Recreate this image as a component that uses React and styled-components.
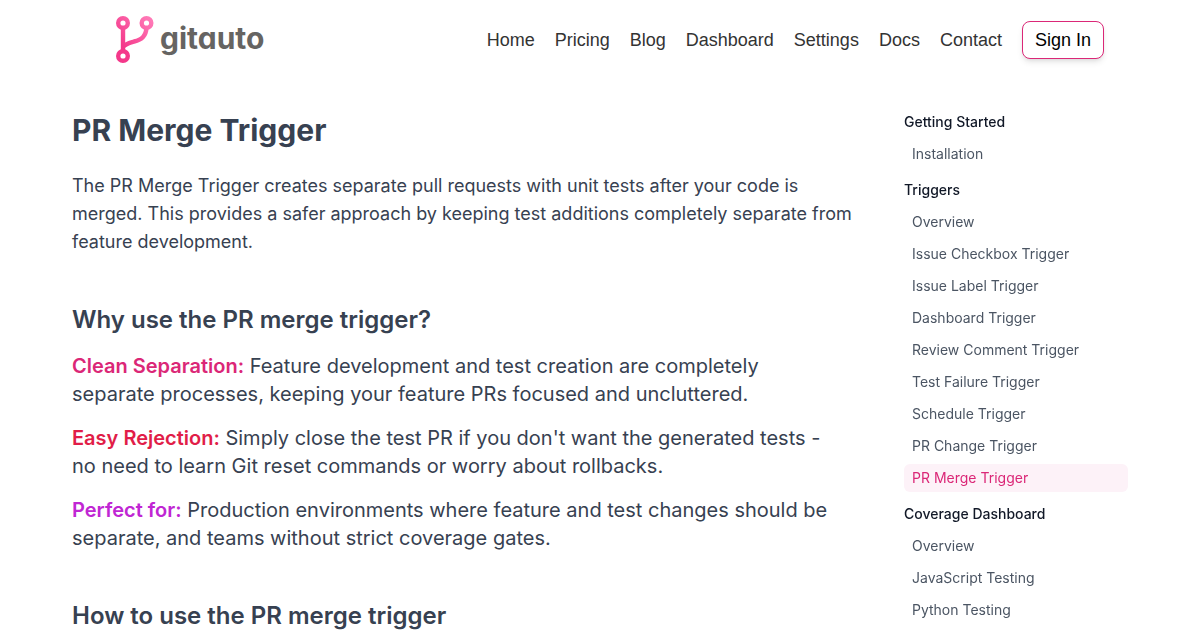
import React from 'react';
import styled, { createGlobalStyle } from 'styled-components';

const GlobalStyle = createGlobalStyle`
  *, *::before, *::after { box-sizing: border-box; }
  body {
    margin: 0;
    background: #fff;
    color: #374151;
    font-family: Inter, "Liberation Sans", sans-serif;
  }
  h1, h2, h3, p, ul { margin: 0; padding: 0; }
  ul { list-style: none; }
  a { color: inherit; text-decoration: none; }
`;

const Header = styled.header`
  display: flex;
  align-items: center;
  justify-content: space-between;
  max-width: 1200px;
  height: 80px;
  margin: 0 auto;
  padding: 0 96px;
  font-family: "Liberation Sans", Arial, sans-serif;
`;

const LogoLink = styled.a`
  display: flex;
  align-items: center;
  gap: 6px;
  padding-left: 20px;
`;

const Wordmark = styled.span`
  padding-bottom: 4px;
  color: #666462;
  font: 700 30px/36px Inter, sans-serif;
  font-feature-settings: "cv11";
`;

const Nav = styled.nav`
  display: flex;
  align-items: center;
  gap: 20px;
  color: #333;
  font-size: 18px;
  line-height: 28px;
`;

const SignInButton = styled.button`
  padding: 4px 12px;
  border: 1px solid #db2777;
  border-radius: 8px;
  background: #fff;
  color: #000;
  font: inherit;
  box-shadow: 0 4px 6px -1px rgba(0, 0, 0, 0.1), 0 2px 4px -2px rgba(0, 0, 0, 0.1);
  cursor: pointer;
`;

const Page = styled.div`
  display: flex;
  gap: 64px;
  max-width: 1152px;
  margin: 0 auto;
  padding: 32px 48px;
`;

const Article = styled.main`
  flex: 1;
  min-width: 0;
`;

const Title = styled.h1`
  margin-bottom: 24px;
  font-size: 30px;
  font-weight: 700;
  line-height: 36px;
`;

const Lead = styled.p`
  margin-right: -20px;
  font-size: 18px;
  line-height: 28px;
`;

const Section = styled.section`
  margin-top: 48px;
`;

const SectionTitle = styled.h2`
  font-size: 24px;
  font-weight: 600;
  line-height: 32px;
`;

const Points = styled.div`
  display: flex;
  flex-direction: column;
  gap: 16px;
  margin-top: 16px;
  font-size: 20px;
  line-height: 28px;
`;

const Term = styled.strong`
  color: ${(p) => p.$color};
  font-weight: 600;
`;

const Sidebar = styled.aside`
  position: sticky;
  top: 32px;
  flex: 0 0 224px;
  display: flex;
  flex-direction: column;
  align-self: flex-start;
  gap: 12px;
  font-size: 14px;
  line-height: 20px;
  will-change: transform;
`;

const GroupTitle = styled.h3`
  margin-bottom: 8px;
  color: #111827;
  font-size: 14px;
  font-weight: 500;
`;

const GroupList = styled.ul`
  display: flex;
  flex-direction: column;
  gap: 4px;
`;

const DocLink = styled.a`
  display: block;
  padding: 4px 8px;
  border-radius: 6px;
  background: ${(p) => (p.$active ? '#fdf2f8' : 'transparent')};
  color: ${(p) => (p.$active ? '#db2777' : '#4b5563')};
`;

const navItems = ['Home', 'Pricing', 'Blog', 'Dashboard', 'Settings', 'Docs', 'Contact'];

const points = [
  {
    term: 'Clean Separation:',
    color: '#db2777',
    text: 'Feature development and test creation are completely separate processes, keeping your feature PRs focused and uncluttered.',
  },
  {
    term: 'Easy Rejection:',
    color: '#e11d48',
    text: "Simply close the test PR if you don't want the generated tests - no need to learn Git reset commands or worry about rollbacks.",
  },
  {
    term: 'Perfect for:',
    color: '#c026d3',
    text: 'Production environments where feature and test changes should be separate, and teams without strict coverage gates.',
  },
];

const groups = [
  { title: 'Getting Started', items: ['Installation'] },
  {
    title: 'Triggers',
    items: [
      'Overview',
      'Issue Checkbox Trigger',
      'Issue Label Trigger',
      'Dashboard Trigger',
      'Review Comment Trigger',
      'Test Failure Trigger',
      'Schedule Trigger',
      'PR Change Trigger',
      'PR Merge Trigger',
    ],
  },
  { title: 'Coverage Dashboard', items: ['Overview', 'JavaScript Testing', 'Python Testing'] },
];

const activeItem = 'PR Merge Trigger';

function BranchIcon() {
  return (
    <svg width="38" height="48" viewBox="0 0 38 48" fill="none" aria-hidden="true">
      <defs>
        <linearGradient id="branch" gradientUnits="userSpaceOnUse" x1="6" y1="30" x2="34" y2="4">
          <stop offset="0" stopColor="#f4388a" />
          <stop offset="1" stopColor="#ff78b6" />
        </linearGradient>
      </defs>
      <g stroke="url(#branch)" strokeWidth="4.400">
        <circle cx="7" cy="7" r="4.800" />
        <circle cx="30.500" cy="7" r="4.800" />
        <circle cx="7" cy="40" r="4.800" />
        <path d="M7.010 11.500V35.500" />
        <path d="M7 31C9 28 13 27 18 25.500C26 23.500 30 20 30.500 11.500" />
      </g>
    </svg>
  );
}

export default function App() {
  return (
    <>
      <GlobalStyle />
      <Header>
        <LogoLink href="#home">
          <BranchIcon />
          <Wordmark>gitauto</Wordmark>
        </LogoLink>
        <Nav aria-label="Main">
          {navItems.map((item) => (
            <a key={item} href={`#${item.toLowerCase()}`}>{item}</a>
          ))}
          <SignInButton type="button">Sign In</SignInButton>
        </Nav>
      </Header>
      <Page>
        <Article>
          <Title>PR Merge Trigger</Title>
          <Lead>
            The PR Merge Trigger creates separate pull requests with unit tests after your code is
            merged. This provides a safer approach by keeping test additions completely separate
            from feature development.
          </Lead>
          <Section>
            <SectionTitle>Why use the PR merge trigger?</SectionTitle>
            <Points>
              {points.map((point) => (
                <p key={point.term}>
                  <Term $color={point.color}>{point.term}</Term> {point.text}
                </p>
              ))}
            </Points>
          </Section>
          <Section>
            <SectionTitle>How to use the PR merge trigger</SectionTitle>
          </Section>
        </Article>
        <Sidebar>
          {groups.map((group) => (
            <nav key={group.title} aria-label={group.title}>
              <GroupTitle>{group.title}</GroupTitle>
              <GroupList>
                {group.items.map((item) => (
                  <li key={item}>
                    <DocLink
                      href="#docs"
                      $active={item === activeItem}
                      aria-current={item === activeItem ? 'page' : undefined}
                    >
                      {item}
                    </DocLink>
                  </li>
                ))}
              </GroupList>
            </nav>
          ))}
        </Sidebar>
      </Page>
    </>
  );
}
